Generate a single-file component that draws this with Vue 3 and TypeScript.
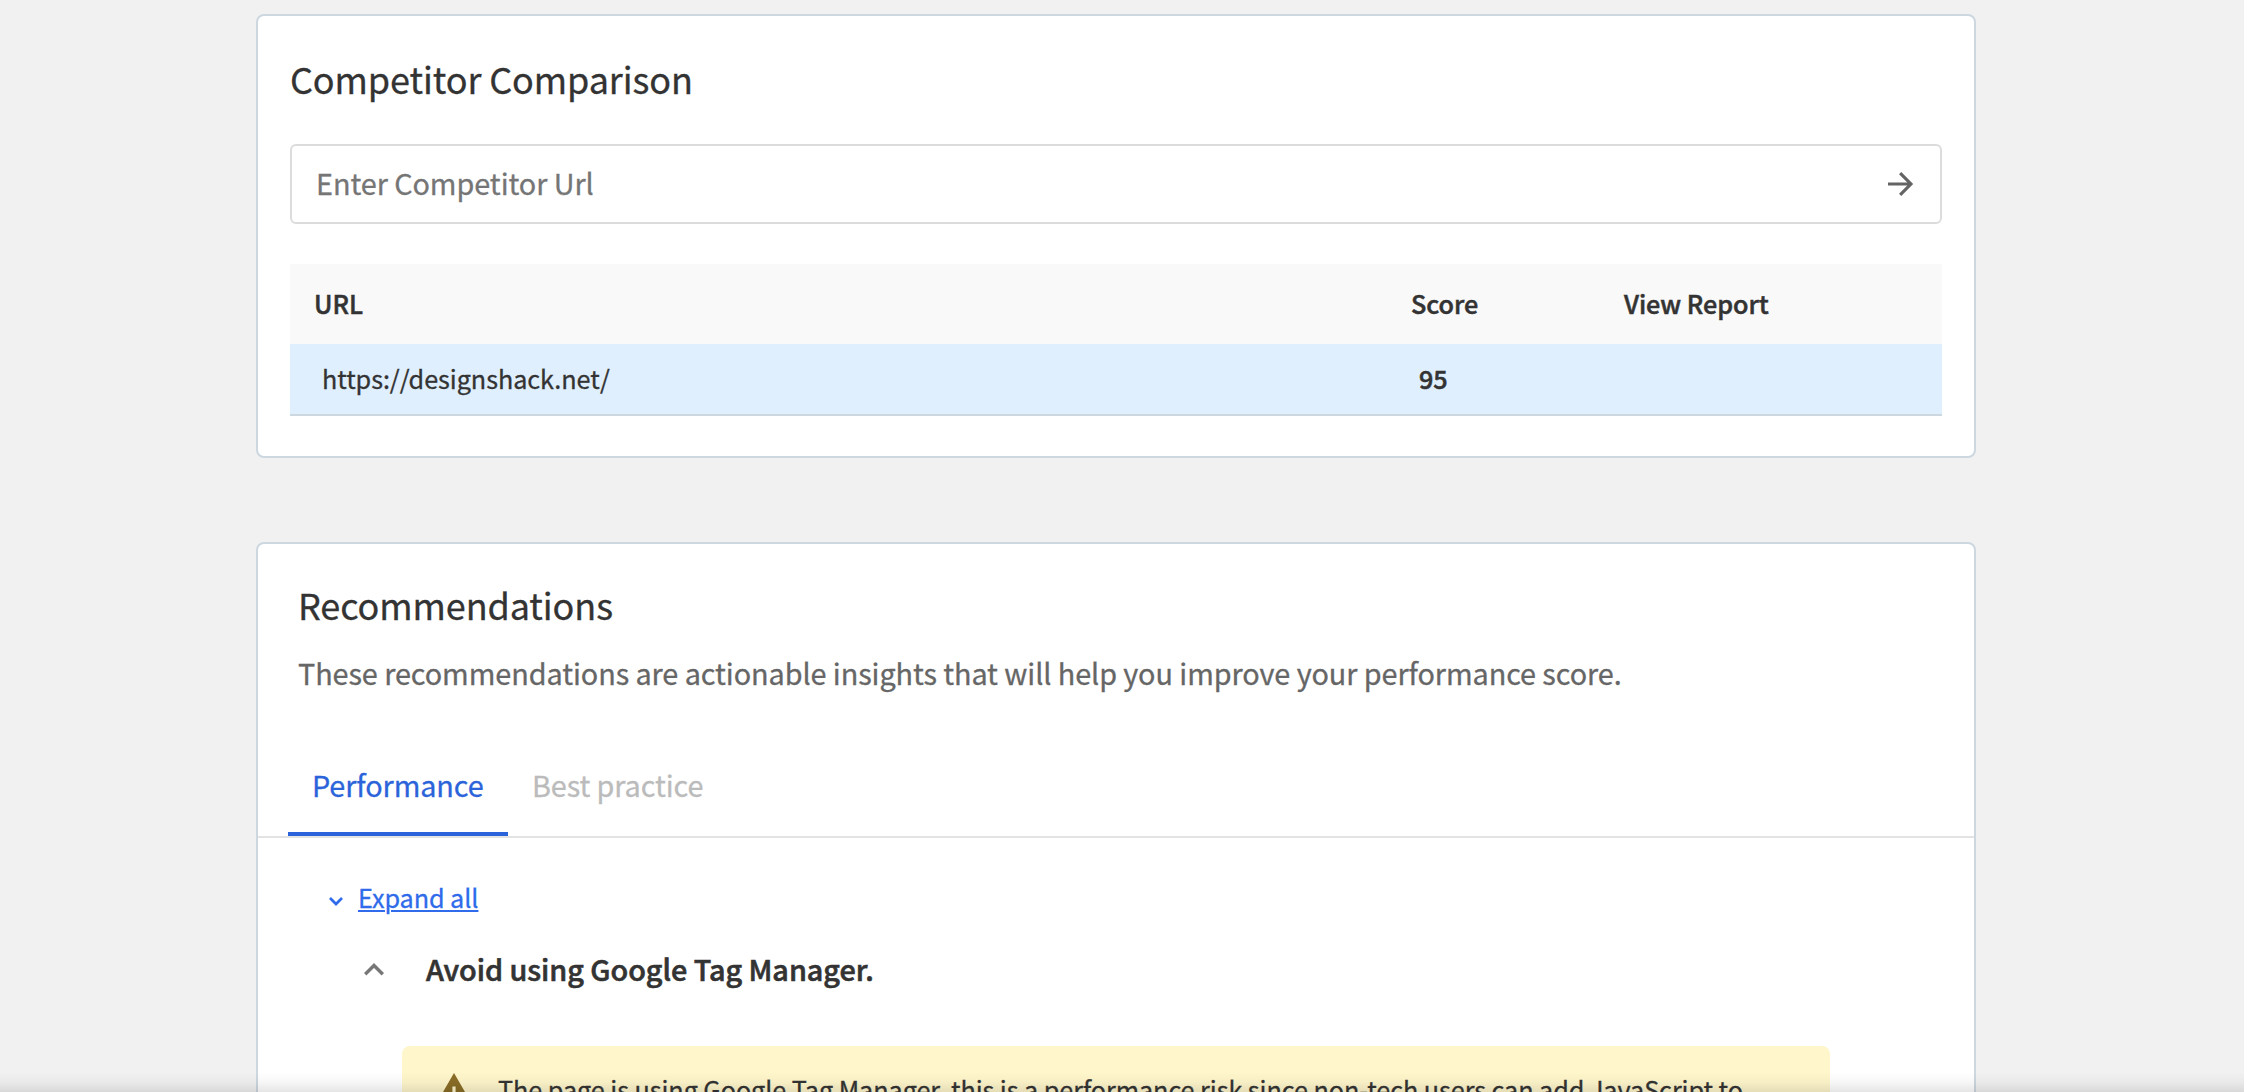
<script setup lang="ts">
import { ref } from 'vue'

interface Competitor {
  url: string
  score: number
}

const competitorUrl = ref('')
const competitors: Competitor[] = [{ url: 'https://designshack.net/', score: 95 }]
const tabs = ['Performance', 'Best practice']
const activeTab = ref('Performance')
</script>

<template>
  <main class="page">
    <section class="card comparison">
      <h2 class="title">Competitor Comparison</h2>
      <form class="search" @submit.prevent>
        <input v-model="competitorUrl" class="search-input" type="text" placeholder="Enter Competitor Url" />
        <button class="search-button" type="submit" aria-label="Compare">
          <svg width="36" height="36" viewBox="0 0 24 24">
            <path d="M4 12H19M12.1 4.7L19.3 12L12.1 19.3" fill="none" stroke="#636463" stroke-width="2.1" />
          </svg>
        </button>
      </form>
      <div class="table">
        <div class="row head">
          <span>URL</span>
          <span>Score</span>
          <span>View Report</span>
        </div>
        <div v-for="item in competitors" :key="item.url" class="row body">
          <span>{{ item.url }}</span>
          <span class="score">{{ item.score }}</span>
        </div>
      </div>
    </section>

    <section class="card recommendations">
      <h2 class="title">Recommendations</h2>
      <p class="subtitle">
        These recommendations are actionable insights that will help you improve your performance score.
      </p>
      <nav class="tabs">
        <button
          v-for="tab in tabs"
          :key="tab"
          class="tab"
          :class="{ active: tab === activeTab }"
          type="button"
          @click="activeTab = tab"
        >
          {{ tab }}
        </button>
      </nav>
      <div class="expand">
        <svg class="chevron-down" width="14" height="9" viewBox="0 0 14 9">
          <path d="M1 1L7 7L13 1" fill="none" stroke="#2f6bea" stroke-width="2.7" />
        </svg>
        <a class="expand-link">Expand all</a>
      </div>
      <div class="item">
        <svg width="20" height="13" viewBox="0 0 20 13">
          <path d="M1.2 11.3L10 2.5L18.8 11.3" fill="none" stroke="#777" stroke-width="3.4" />
        </svg>
        <h3 class="item-title">Avoid using Google Tag Manager.</h3>
      </div>
      <div class="alert">
        <svg class="alert-icon" width="44" height="38" viewBox="0 0 22 19">
          <path d="M0 19h22L11 0 0 19zm12-3h-2v-2h2v2zm-.2-4h-1.6V6.7h1.6V12z" fill="#8a6d26" />
        </svg>
        <p class="alert-text">
          The page is using Google Tag Manager, this is a performance risk since non-tech users can add JavaScript to
        </p>
      </div>
    </section>
    <div class="bottom-shade"></div>
  </main>
</template>

<style>
body {
  margin: 0;
  background: #f1f1f1;
}
</style>

<style scoped>
.page {
  position: relative;
  box-sizing: border-box;
  width: 2244px;
  height: 1092px;
  padding: 14px 268px 0 256px;
  overflow: hidden;
  background: #f1f1f1;
  color: #333;
  font-family: "Noto Sans CJK SC", "Noto Sans", sans-serif;
  font-size: 25.2px;
  -webkit-text-stroke: 0.3px currentColor;
}

.card {
  box-sizing: border-box;
  width: 1720px;
  border: 2px solid #cdd7e0;
  border-radius: 8px;
  background: #fff;
}

.title {
  margin: 0;
  font-size: 36px;
  font-weight: 400;
  line-height: 44px;
  letter-spacing: -0.1px;
}

.comparison {
  height: 444px;
  padding: 40px 32px 0;
}

.search {
  display: flex;
  box-sizing: border-box;
  align-items: center;
  height: 80px;
  margin-top: 44px;
  padding-right: 22px;
  border: 2px solid #dcdcdc;
  border-radius: 6px;
}

.search-input {
  flex: 1;
  height: 40px;
  padding: 0 24px 3px;
  border: 0;
  outline: 0;
  background: none;
  color: #333;
  font: inherit;
  font-size: 28.8px;
  letter-spacing: -0.06px;
}

.search-input::placeholder {
  color: #757575;
  opacity: 1;
}

.search-button {
  display: flex;
  padding: 0;
  border: 0;
  background: none;
}

.table {
  margin-top: 40px;
}

.row {
  display: grid;
  grid-template-columns: 1097px 213px 1fr;
  align-items: center;
  box-sizing: border-box;
  line-height: 36px;
}

.head {
  height: 80px;
  padding: 0 24px 2px;
  background: #f9f9f9;
  font-weight: 500;
  letter-spacing: -0.05px;
  -webkit-text-stroke: 0.5px currentColor;
}

.body {
  height: 72px;
  padding: 0 32px 2px;
  border-bottom: 2px solid #cdd7e0;
  background: #e0effd;
  letter-spacing: -0.05px;
}

.score {
  font-weight: 500;
  -webkit-text-stroke: 0.5px currentColor;
}

.recommendations {
  height: 700px;
  margin-top: 84px;
  padding-top: 38px;
}

.recommendations .title {
  padding-left: 40px;
}

.subtitle {
  margin: 27px 0 0;
  padding-left: 40px;
  color: #666;
  font-size: 28.8px;
  line-height: 40px;
  letter-spacing: -0.072px;
}

.tabs {
  display: flex;
  margin-top: 47px;
  padding-left: 30px;
  border-bottom: 2px solid #e3e3e3;
}

.tab {
  box-sizing: border-box;
  width: 220px;
  height: 96px;
  padding: 25px 0 27px 24px;
  border: 0;
  border-bottom: 4px solid transparent;
  background: none;
  color: #bbb;
  font: inherit;
  font-size: 28.8px;
  line-height: 40px;
  letter-spacing: -0.1px;
  text-align: left;
}

.tab.active {
  border-bottom-color: #2b63da;
  color: #2b63da;
}

.expand {
  display: flex;
  align-items: center;
  margin: 41px 0 0 71px;
  line-height: 36px;
}

.chevron-down {
  margin-top: 8px;
}

.expand-link {
  margin-left: 15px;
  color: #2f6bea;
  letter-spacing: -0.06px;
  text-decoration: underline;
  text-decoration-thickness: 2px;
  text-underline-offset: 2px;
}

.item {
  display: flex;
  align-items: center;
  margin: 34px 0 0 106px;
}

.item-title {
  margin: 0 0 0 42px;
  font-size: 28.8px;
  font-weight: 500;
  line-height: 40px;
  letter-spacing: -0.04px;
  -webkit-text-stroke: 0.6px currentColor;
}

.alert {
  display: flex;
  align-items: flex-start;
  box-sizing: border-box;
  width: 1428px;
  height: 160px;
  margin: 57px 0 0 144px;
  padding: 27px 24px 0 30px;
  border-radius: 8px;
  background: #fff6cb;
}

.alert-icon {
  flex: none;
}

.alert-text {
  margin: -2px 0 0 22px;
  line-height: 36px;
  letter-spacing: -0.055px;
  white-space: nowrap;
}

.bottom-shade {
  position: absolute;
  right: 0;
  bottom: 0;
  left: 0;
  height: 20px;
  background: linear-gradient(rgba(0, 0, 0, 0), rgba(0, 0, 0, 0.03) 50%, rgba(0, 0, 0, 0.1));
}
</style>
